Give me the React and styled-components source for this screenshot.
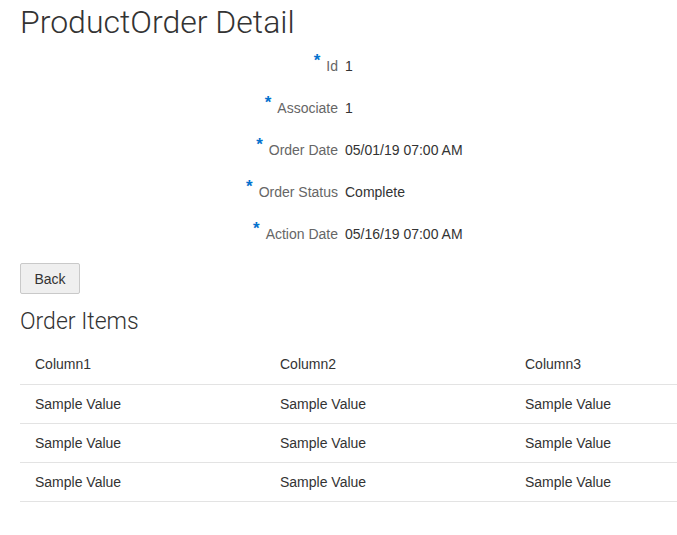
import React from 'react';
import styled, { createGlobalStyle } from "styled-components";

const GlobalStyle = createGlobalStyle`
   html, body {
      margin: 0;
      padding: 0;
      background: #fff;
   }
   body {
      font-family: "Helvetica Neue", "Liberation Sans", Arial, sans-serif;
      color: #333;
      font-size: 14px;
   }
`

const fields = [
   { label: "Id", value: "1" },
   { label: "Associate", value: "1" },
   { label: "Order Date", value: "05/01/19 07:00 AM" },
   { label: "Order Status", value: "Complete" },
   { label: "Action Date", value: "05/16/19 07:00 AM" },
];

const columns = ["Column1", "Column2", "Column3"];
const rows = [1, 2, 3];

const App = () => {
   return (
      <Page>
         <GlobalStyle />
         <Title>ProductOrder Detail</Title>
         <Form>
            {fields.map((f) => (
               <FormRow key={f.label}>
                  <Label>
                     <Required>*</Required>
                     {f.label}
                  </Label>
                  <Value>{f.value}</Value>
               </FormRow>
            ))}
         </Form>
         <Button type="button">Back</Button>
         <SubTitle>Order Items</SubTitle>
         <Table>
            <thead>
               <tr>
                  {columns.map((c) => <Th key={c}>{c}</Th>)}
               </tr>
            </thead>
            <tbody>
               {rows.map((r) => (
                  <tr key={r}>
                     {columns.map((c) => <Td key={c}>Sample Value</Td>)}
                  </tr>
               ))}
            </tbody>
         </Table>
      </Page>
   )
}

const Page = styled.div`
   padding: 0 0 0 20px;
   width: 677px;
   height: 535px;
   box-sizing: border-box;
   overflow: hidden;
`

const Title = styled.h1`
   margin: 0;
   padding-top: 2px;
   font-family: Roboto, "Liberation Sans", sans-serif;
   font-weight: 300;
   font-size: 32px;
   line-height: 40px;
   color: #333;
`

const Form = styled.div`
   display: flex;
   flex-direction: column;
   margin-top: 3px;
`

const FormRow = styled.div`
   display: grid;
   grid-template-columns: 318px 1fr;
   column-gap: 7px;
   height: 42px;
   align-items: center;
`

const Label = styled.div`
   text-align: right;
   color: #666;
`

const Required = styled.span`
   color: #0572ce;
   font-size: 17px;
   font-weight: bold;
   position: relative;
   top: -5px;
   margin-right: 6px;
`

const Value = styled.div`
   color: #333;
`

const Button = styled.button`
   display: block;
   margin-top: 8px;
   width: 60px;
   height: 31px;
   padding: 0;
   font-family: inherit;
   font-size: 14px;
   color: #333;
   background: #efefef;
   border: 1px solid #c9c9c9;
   border-radius: 2px;
`

const SubTitle = styled.h2`
   margin: 13px 0 7px;
   font-family: Roboto, "Liberation Sans", sans-serif;
   font-weight: 300;
   font-size: 23px;
   line-height: 29px;
   color: #333;
`

const Table = styled.table`
   width: 735px;
   border-collapse: collapse;
   table-layout: fixed;
`

const Th = styled.th`
   text-align: left;
   font-weight: normal;
   height: 41px;
   padding: 0 15px;
   border-bottom: 1px solid #e3e3e3;
   color: #333;
`

const Td = styled.td`
   height: 38px;
   padding: 0 15px;
   border-bottom: 1px solid #e3e3e3;
   color: #333;
`

export default App;
